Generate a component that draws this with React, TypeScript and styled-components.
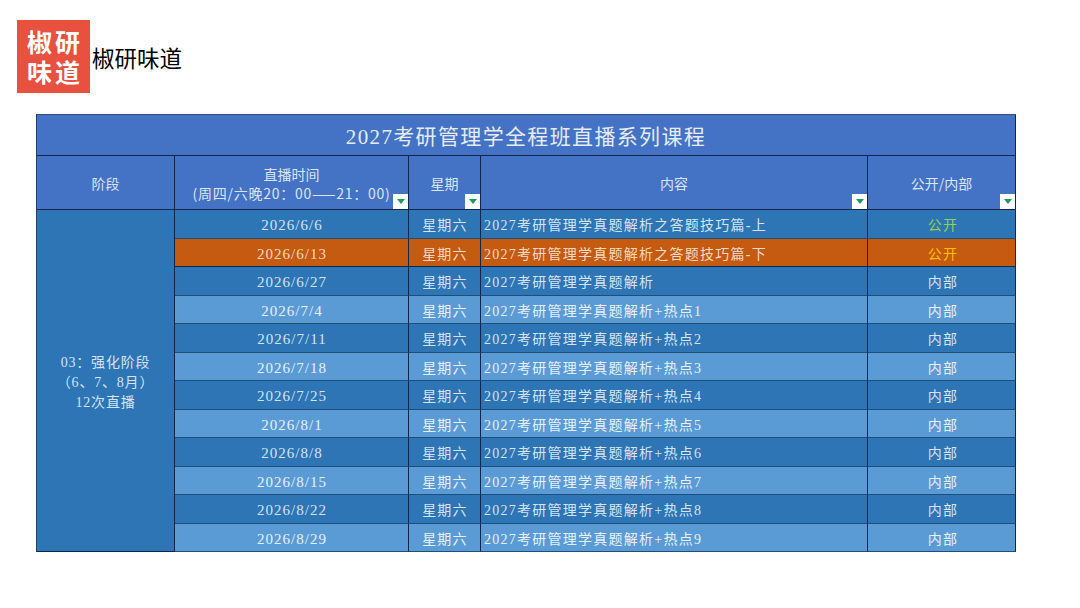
import React from 'react';
import styled, { createGlobalStyle } from 'styled-components';

const sessions = [
  { date: '2026/6/6', topic: '2027考研管理学真题解析之答题技巧篇-上', access: '公开', tone: 'dark' },
  { date: '2026/6/13', topic: '2027考研管理学真题解析之答题技巧篇-下', access: '公开', tone: 'accent' },
  { date: '2026/6/27', topic: '2027考研管理学真题解析', access: '内部', tone: 'dark' },
  { date: '2026/7/4', topic: '2027考研管理学真题解析+热点1', access: '内部', tone: 'light' },
  { date: '2026/7/11', topic: '2027考研管理学真题解析+热点2', access: '内部', tone: 'dark' },
  { date: '2026/7/18', topic: '2027考研管理学真题解析+热点3', access: '内部', tone: 'light' },
  { date: '2026/7/25', topic: '2027考研管理学真题解析+热点4', access: '内部', tone: 'dark' },
  { date: '2026/8/1', topic: '2027考研管理学真题解析+热点5', access: '内部', tone: 'light' },
  { date: '2026/8/8', topic: '2027考研管理学真题解析+热点6', access: '内部', tone: 'dark' },
  { date: '2026/8/15', topic: '2027考研管理学真题解析+热点7', access: '内部', tone: 'light' },
  { date: '2026/8/22', topic: '2027考研管理学真题解析+热点8', access: '内部', tone: 'dark' },
  { date: '2026/8/29', topic: '2027考研管理学真题解析+热点9', access: '内部', tone: 'light' },
];

const FilterButton = () => (
  <Filter>
    <svg width="8" height="5" viewBox="0 0 8 5">
      <path d="M0 0h8L4 5z" fill="#1f9a5c" />
    </svg>
  </Filter>
);

const App: React.FC = () => (
  <>
    <GlobalStyle />
    <Page>
      <Brand>
        <Logo>
          <span>椒研</span>
          <span>味道</span>
        </Logo>
        <BrandName>椒研味道</BrandName>
      </Brand>
      <Sheet>
        <Title>2027考研管理学全程班直播系列课程</Title>
        <HeaderCell>阶段</HeaderCell>
        <HeaderCell>
          <span>直播时间</span>
          <TimeNote>(周四/六晚20：00——21：00)</TimeNote>
          <FilterButton />
        </HeaderCell>
        <HeaderCell>
          星期
          <FilterButton />
        </HeaderCell>
        <HeaderCell>
          内容
          <FilterButton />
        </HeaderCell>
        <HeaderCell>
          公开/内部
          <FilterButton />
        </HeaderCell>
        <Stage>
          <span>03：强化阶段</span>
          <span>（6、7、8月）</span>
          <span>12次直播</span>
        </Stage>
        {sessions.map((s) => (
          <React.Fragment key={s.date}>
            <DateCell $tone={s.tone}>{s.date}</DateCell>
            <Cell $tone={s.tone}>星期六</Cell>
            <Cell $tone={s.tone} $left>{s.topic}</Cell>
            <AccessCell $tone={s.tone} $highlight={s.access === '公开'}>
              {s.access}
            </AccessCell>
          </React.Fragment>
        ))}
      </Sheet>
    </Page>
  </>
);

export default App;

const serif = `"Liberation Serif", "Noto Sans CJK SC", serif`;

const GlobalStyle = createGlobalStyle`
  html, body {
    margin: 0;
    background: #fff;
  }
`;

const Page = styled.div`
  width: 1080px;
  height: 608px;
  padding: 20px 0 0 17px;
  box-sizing: border-box;
  overflow: hidden;
  font-family: ${serif};
`;

const Brand = styled.div`
  display: flex;
  align-items: center;
  gap: 2px;
  height: 73px;
`;

const Logo = styled.div`
  width: 73px;
  height: 73px;
  padding-bottom: 2px;
  box-sizing: border-box;
  background: #e8503f;
  color: #fff;
  display: flex;
  flex-direction: column;
  align-items: center;
  justify-content: center;
  gap: 2px;
  font-family: "Noto Sans CJK SC", sans-serif;
  font-size: 25px;
  font-weight: 700;
  line-height: 28px;
  letter-spacing: 3px;
  text-indent: 3px;
`;

const BrandName = styled.div`
  font-family: "Noto Sans CJK SC", sans-serif;
  font-size: 22.5px;
  line-height: 30px;
  color: #000;
`;

const Sheet = styled.div`
  display: grid;
  grid-template-columns: 138px 234px 72px 387px 148px;
  grid-template-rows: 41px 54px repeat(12, 1fr);
  width: 980px;
  height: 438px;
  margin: 21px 0 0 19px;
  box-sizing: border-box;
  border-top: 1px solid #2f4f7d;
  border-left: 1px solid #1f3f6d;
  color: #d5e3f2;
`;

const Title = styled.div`
  grid-column: 1 / -1;
  display: flex;
  align-items: center;
  justify-content: center;
  background: #4472c4;
  border-bottom: 1px solid #10264a;
  border-right: 1px solid #10264a;
  font-size: 21px;
  letter-spacing: 1.35px;
  color: #e6ecf7;
`;

const HeaderCell = styled.div`
  position: relative;
  display: flex;
  flex-direction: column;
  align-items: center;
  justify-content: center;
  padding-top: 2px;
  background: #4472c4;
  border-right: 1px solid #10264a;
  border-bottom: 1px solid #10264a;
  font-family: "Noto Sans CJK SC", sans-serif;
  font-size: 14px;
  line-height: 19px;
  color: #dbe4f4;
`;

const TimeNote = styled.span`
  letter-spacing: 0.75px;
  white-space: nowrap;
`;

const Filter = styled.div`
  position: absolute;
  right: 0;
  bottom: 0;
  width: 15px;
  height: 15px;
  background: #fff;
  display: flex;
  align-items: center;
  justify-content: center;
`;

const Stage = styled.div`
  grid-column: 1;
  grid-row: 3 / span 12;
  display: flex;
  flex-direction: column;
  align-items: center;
  justify-content: center;
  background: #2e75b6;
  border-right: 1px solid #10264a;
  border-bottom: 1px solid #10264a;
  font-size: 14px;
  line-height: 20px;
  letter-spacing: 0.8px;
  padding-top: 4px;
`;

const toneColors: Record<string, string> = {
  accent: '#c55a11',
  dark: '#2e75b6',
  light: '#5b9bd5',
};

const textColors: Record<string, string> = {
  accent: '#f6d9c2',
  dark: '#d5e3f2',
  light: '#e6f0fa',
};

const Cell = styled.div<{
  $tone: string;
  $left?: boolean;
  $highlight?: boolean;
}>`
  display: flex;
  align-items: center;
  justify-content: ${(p) => (p.$left ? 'flex-start' : 'center')};
  padding: 1px 0 0 ${(p) => (p.$left ? '3px' : '1px')};
  background: ${(p) => toneColors[p.$tone]};
  border-right: 1px solid #10264a;
  border-bottom: 1px solid ${(p) => (p.$tone === 'accent' ? '#10264a' : '#1f4e79')};
  font-size: 14px;
  letter-spacing: 1.25px;
  white-space: nowrap;
  color: ${(p) =>
    p.$highlight ? (p.$tone === 'accent' ? '#ffc000' : '#92d050') : textColors[p.$tone]};
`;

const DateCell = styled(Cell)`
  padding-top: 4px;
  font-size: 15px;
  letter-spacing: 1px;
`;

const AccessCell = styled(Cell)`
  padding-left: 3px;
`;
